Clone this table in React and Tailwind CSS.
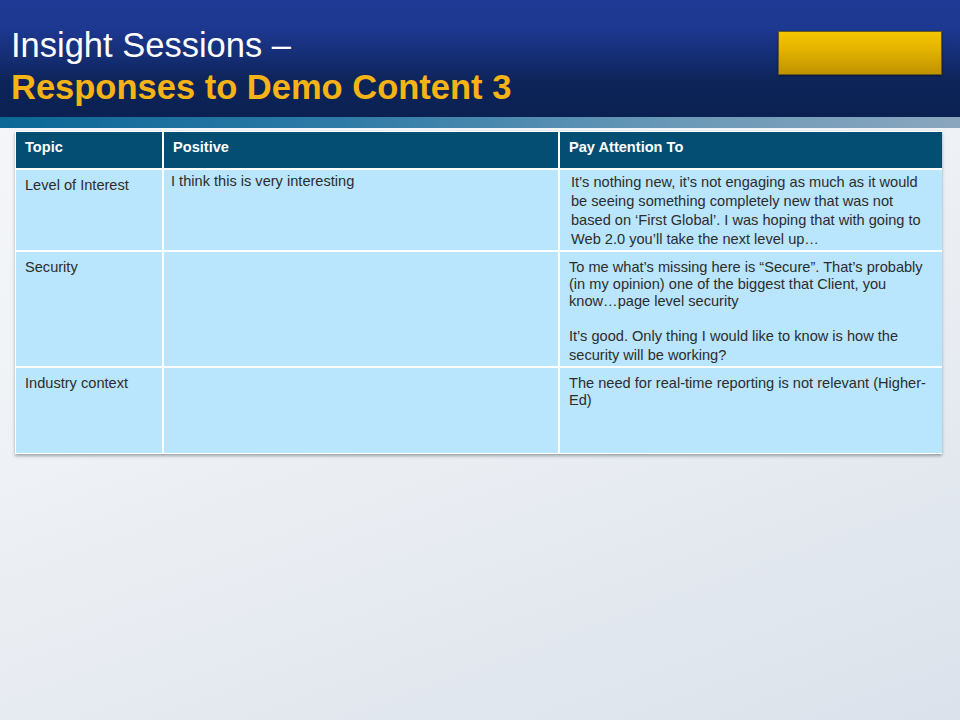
const rows = [
  {
    topic: "Level of Interest",
    positive: "I think this is very interesting",
    attention: [
      "It’s nothing new, it’s not engaging as much as it would be seeing something completely new that was not based on ‘First Global’. I was hoping that with going to Web 2.0 you’ll take the next level up…",
    ],
    height: "h-[80px]",
  },
  {
    topic: "Security",
    positive: "",
    attention: [
      "To me what’s missing here is “Secure”. That’s probably (in my opinion) one of the biggest that Client, you know…page level security",
      "It’s good. Only thing I would like to know is how the security will be working?",
    ],
    height: "h-[114px]",
  },
  {
    topic: "Industry context",
    positive: "",
    attention: ["The need for real-time reporting is not relevant (Higher-Ed)"],
    height: "h-[85px]",
  },
];

function Header() {
  return (
    <header>
      <div className="h-[117px] bg-[linear-gradient(180deg,#1f3a94_0%,#1d3890_25%,#142d72_50%,#0d2459_70%,#0b2152_100%)] flex items-start justify-between pl-[11px] pr-[18px]">
        <div className="pt-[24px]">
          <h1 className="text-[34.5px] leading-[42px] text-white">Insight Sessions –</h1>
          <h2 className="text-[34.5px] leading-[42px] font-bold text-[#f6b315]">Responses to Demo Content 3</h2>
        </div>
        <div className="mt-[31px] w-[164px] h-[44px] border border-[#6b5a1e] bg-[linear-gradient(180deg,#f4c500_0%,#e2b200_45%,#c09200_100%)] shadow-[0_1px_2px_rgba(0,0,0,0.5)]" />
      </div>
      <div className="h-[11px] bg-[linear-gradient(90deg,#0c6797_0%,#2d7aa6_35%,#6a98b7_70%,#8aa6be_100%)]" />
    </header>
  );
}

export default function App() {
  return (
    <div
      className="w-[960px] h-[720px] overflow-hidden bg-[linear-gradient(160deg,#f6f8fa_0%,#eef1f5_45%,#dbe2eb_100%)]"
      style={{ fontFamily: '"Liberation Sans", Arial, sans-serif' }}
    >
      <Header />
      <main className="pt-[3px] pl-[15px]">
        <div className="w-[927px] bg-white p-[1px] shadow-[0_2px_3px_rgba(60,70,80,0.45)]">
          <div className="grid grid-cols-[146px_394px_382px] gap-[2px] bg-white text-[14.6px] leading-[17px] text-[#2d2d2d]">
            <div className="h-[36px] bg-[#044d73] text-white font-bold pl-[9px] pt-[7px]">Topic</div>
            <div className="h-[36px] bg-[#044d73] text-white font-bold pl-[9px] pt-[7px]">Positive</div>
            <div className="h-[36px] bg-[#044d73] text-white font-bold pl-[9px] pt-[7px]">Pay Attention To</div>
            {rows.map((row, i) => (
              <div key={row.topic} className="contents">
                <div className={`${row.height} bg-[#b9e5fd] pl-[9px] pt-[7px]`}>{row.topic}</div>
                <div className={`${row.height} bg-[#b9e5fd] pl-[7px] ${i === 0 ? "pt-[3px]" : "pt-[6px]"}`}>{row.positive}</div>
                <div className={`${row.height} bg-[#b9e5fd] pr-[8px] ${i === 0 ? "pl-[11px] pt-[3px] leading-[19px]" : "pl-[9px] pt-[7px]"}`}>
                  {row.attention.map((p, j) => (
                    <p key={j} className={j > 0 ? "mt-[17px] leading-[19px]" : ""}>{p}</p>
                  ))}
                </div>
              </div>
            ))}
          </div>
        </div>
      </main>
    </div>
  );
}
